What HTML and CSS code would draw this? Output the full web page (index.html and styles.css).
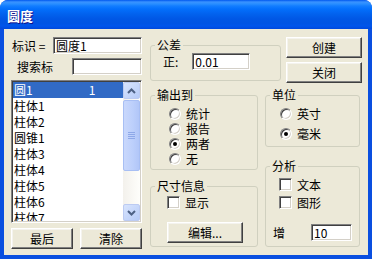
FILE: index.html
```html
<!DOCTYPE html>
<html lang="zh-CN">
<head>
  <meta charset="UTF-8">
  <meta name="viewport" content="width=device-width, initial-scale=1.0">
  <link rel="stylesheet" href="styles.css">
</head>
<body>
  <div class="window">
    <div class="titlebar"><span class="title">圆度</span></div>
    <div class="client">

      <div class="col-left">
        <div class="field-row row-id">
          <span class="lbl">标识 =</span>
          <input class="edit edit-id" type="text" value="圆度1">
        </div>
        <div class="field-row row-search">
          <span class="lbl">搜索标</span>
          <input class="edit edit-search" type="text">
        </div>

        <div class="listbox">
          <ul class="items">
            <li class="sel"><span>圆1</span><span class="num">1</span></li>
            <li><span>柱体1</span></li>
            <li><span>柱体2</span></li>
            <li><span>圆锥1</span></li>
            <li><span>柱体3</span></li>
            <li><span>柱体4</span></li>
            <li><span>柱体5</span></li>
            <li><span>柱体6</span></li>
            <li><span>柱体7</span></li>
          </ul>
          <div class="vscroll">
            <div class="sb-btn">
              <svg width="9" height="6" viewBox="0 0 9 6"><path d="M1 5 L4.5 1.5 L8 5" fill="none" stroke="#4d6185" stroke-width="2"/></svg>
            </div>
            <div class="sb-thumb">
              <svg width="7" height="8" viewBox="0 0 7 8">
                <path d="M0 0.5h7M0 2.5h7M0 4.5h7M0 6.5h7" stroke="#8ea8e8" stroke-width="1"/>
              </svg>
            </div>
            <div class="sb-track"></div>
            <div class="sb-btn">
              <svg width="9" height="6" viewBox="0 0 9 6"><path d="M1 1 L4.5 4.5 L8 1" fill="none" stroke="#4d6185" stroke-width="2"/></svg>
            </div>
          </div>
        </div>

        <div class="btn-row">
          <button class="btn btn-half">最后</button>
          <button class="btn btn-half">清除</button>
        </div>
      </div>

      <div class="col-right">
        <div class="top-row">
          <div class="group g-tol">
            <span class="group-title">公差</span>
            <div class="tol-row">
              <span class="lbl">正:</span>
              <input class="edit edit-tol" type="text" value="0.01">
            </div>
          </div>
          <div class="cmd-col">
            <button class="btn cmd">创建</button>
            <button class="btn cmd">关闭</button>
          </div>
        </div>

        <div class="bottom-row">
          <div class="col-mid">
            <div class="group g-out">
              <span class="group-title">输出到</span>
              <div class="opt"><span class="radio"></span>统计</div>
              <div class="opt"><span class="radio"></span>报告</div>
              <div class="opt"><span class="radio on"></span>两者</div>
              <div class="opt"><span class="radio"></span>无</div>
            </div>
            <div class="group g-dim">
              <span class="group-title">尺寸信息</span>
              <div class="opt"><span class="check"></span>显示</div>
              <button class="btn btn-edit">编辑...</button>
            </div>
          </div>

          <div class="col-side">
            <div class="group g-unit">
              <span class="group-title">单位</span>
              <div class="opt"><span class="radio"></span>英寸</div>
              <div class="opt"><span class="radio on"></span>毫米</div>
            </div>
            <div class="group g-ana">
              <span class="group-title">分析</span>
              <div class="opt"><span class="check"></span>文本</div>
              <div class="opt"><span class="check"></span>图形</div>
              <div class="inc-row">
                <span class="lbl">增</span>
                <input class="edit edit-inc" type="text" value="10">
              </div>
            </div>
          </div>
        </div>
      </div>

    </div>
  </div>
</body>
</html>
```

FILE: styles.css
```css
* {
  box-sizing: border-box;
}

body {
  margin: 0;
  font-family: "Noto Sans CJK SC", "DejaVu Sans", sans-serif;
  font-size: 12px;
  color: #000;
  background: #fff;
}

.window {
  width: 372px;
  height: 259px;
  background: #0a4fe0;
  border-radius: 8px 8px 0 0;
  overflow: hidden;
}

.titlebar {
  height: 29px;
  padding: 2px 0 0 7px;
  background: linear-gradient(to bottom,
    #0058ee 0, #3a93ff 2px, #288eff 4px, #127dff 6px, #036ffc 9px,
    #0262ee 14px, #0057e5 19px, #0054e3 23px, #0055eb 26px, #0048dc 29px);
  line-height: 27px;
}

.title {
  color: #fff;
  font-size: 13px;
  font-weight: bold;
  text-shadow: 1px 1px #0f1089;
}

.client {
  display: flex;
  gap: 8px;
  height: 226px;
  margin: 0 4px;
  padding: 8px 6px 0 7px;
  background: #ece9d8;
}

/* left column */
.col-left {
  width: 131px;
  display: flex;
  flex-direction: column;
}

.field-row {
  display: flex;
  align-items: center;
  height: 17px;
}

.row-search {
  margin-top: 4px;
}

.lbl {
  line-height: 14px;
  white-space: nowrap;
}

.row-id .lbl {
  margin-left: 1px;
}

.row-search .lbl {
  margin-left: 6px;
}

.edit {
  height: 17px;
  margin: 0;
  padding: 0 2px;
  font: inherit;
  line-height: 13px;
  color: #000;
  background: #fff;
  border: 1px solid;
  border-color: #808080 #fff #fff #808080;
  box-shadow: inset 1px 1px #404040, inset -1px -1px #d4d0c8;
  outline: none;
}

.edit-id {
  width: 89px;
  margin-left: auto;
}

.edit-search {
  width: 70px;
  margin-left: auto;
}

.listbox {
  display: flex;
  height: 143px;
  margin-top: 5px;
  background: #fff;
  border: 1px solid;
  border-color: #808080 #fff #fff #808080;
  box-shadow: inset 1px 1px #404040, inset -1px -1px #d4d0c8;
  padding: 1px;
}

.items {
  flex: 1;
  margin: 0;
  padding: 0;
  list-style: none;
  overflow: hidden;
}

.items li {
  display: flex;
  height: 16px;
  line-height: 16px;
  padding-left: 1px;
}

.items li.sel {
  background: #316ac5;
  color: #fff;
}

.num {
  margin-left: 56px;
}

.vscroll {
  width: 17px;
  display: flex;
  flex-direction: column;
  background: linear-gradient(to right, #f3f1ec, #fefefb);
}

.sb-btn {
  height: 17px;
  display: flex;
  align-items: center;
  justify-content: center;
  background: linear-gradient(to bottom right, #d8e4fd, #b6cbf8);
  border: 1px solid #bccbf2;
  border-radius: 2px;
}

.sb-thumb {
  height: 71px;
  margin-top: 1px;
  display: flex;
  align-items: center;
  justify-content: center;
  background: linear-gradient(to right, #c9d8fc, #bccffb 60%, #b1c6f8);
  border: 1px solid #a8bff4;
  border-radius: 2px;
}

.sb-track {
  flex: 1;
}

.btn-row {
  display: flex;
  justify-content: space-between;
  margin-top: 5px;
}

.btn {
  height: 21px;
  margin: 0;
  padding: 0;
  font: inherit;
  color: #000;
  background: #ece9d8;
  border: 1px solid;
  border-color: #fff #404040 #404040 #fff;
  box-shadow: inset -1px -1px #808080, inset 1px 1px #f4f3ee;
}

.btn-half {
  width: 62px;
}

/* right side */
.col-right {
  width: 212px;
  display: flex;
  flex-direction: column;
}

.top-row {
  display: flex;
  align-items: flex-start;
  gap: 5px;
}

.group {
  position: relative;
  border: 1px solid #d0d0bf;
  border-radius: 3px;
}

/* caption laid over the top border of the group box */
.group-title {
  position: absolute;
  top: -8px;
  left: 4px;
  padding: 0 2px;
  line-height: 14px;
  background: #ece9d8;
}

.g-tol {
  width: 131px;
  margin-top: 8px;
  padding: 7px 0 10px 12px;
}

.tol-row {
  display: flex;
  align-items: center;
}

.edit-tol {
  width: 58px;
  margin-left: 14px;
}

.cmd-col {
  display: flex;
  flex-direction: column;
  gap: 4px;
}

.cmd {
  width: 76px;
}

.bottom-row {
  display: flex;
  gap: 7px;
}

.col-mid {
  width: 108px;
  display: flex;
  flex-direction: column;
}

.col-side {
  width: 95px;
  display: flex;
  flex-direction: column;
}

.opt {
  display: flex;
  align-items: center;
  gap: 5px;
  height: 15px;
  line-height: 15px;
}

.radio {
  position: relative;
  width: 12px;
  height: 12px;
  border-radius: 50%;
  background: #fff;
  border: 1px solid;
  border-color: #808080 #fff #fff #808080;
  box-shadow: inset 1px 1px #404040, inset -1px -1px #d4d0c8;
}

/* dot sits over the radio circle */
.radio.on::after {
  content: "";
  position: absolute;
  left: 3px;
  top: 3px;
  width: 4px;
  height: 4px;
  border-radius: 50%;
  background: #000;
}

.check {
  width: 13px;
  height: 13px;
  background: #fff;
  border: 1px solid;
  border-color: #808080 #fff #fff #808080;
  box-shadow: inset 1px 1px #404040, inset -1px -1px #d4d0c8;
}

.g-out {
  margin-top: 12px;
  padding: 10px 0 3px 18px;
}

.g-dim {
  margin-top: 16px;
  padding: 8px 0 3px 16px;
}

.btn-edit {
  width: 76px;
  margin-top: 12px;
}

.g-unit {
  margin-top: 12px;
  padding: 10px 0 5px 14px;
}

.g-unit .opt + .opt {
  margin-top: 5px;
}

.g-ana {
  margin-top: 19px;
  padding: 10px 7px 5px 13px;
}

.g-ana .opt + .opt {
  margin-top: 3px;
}

.inc-row {
  display: flex;
  align-items: center;
  justify-content: space-between;
  margin: 14px 0 0 -6px;
}

.edit-inc {
  width: 41px;
}
```
